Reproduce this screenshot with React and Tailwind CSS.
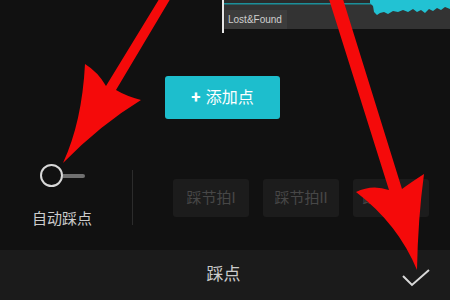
const font = "font-['Roboto','Noto_Sans_CJK_SC',sans-serif]";

const Waveform = () => (
  <svg className="absolute left-0 top-0" width="226" height="16" viewBox="0 0 226 16">
    <rect x="0" y="0" width="226" height="3" fill="#2a2a2a" />
    <rect x="0" y="3" width="150" height="1.5" fill="#1b8f9a" />
    <polygon
      fill="#22c2d3"
      points="146,0 146,3 149,6 150,12 153,15 156,13 160,12 164,14 169,11 174,12 179,10 184,12 189,9 193,12 197,10 201,13 205,9 209,11 213,8 217,10 221,7 226,9 226,0"
    />
  </svg>
);

const Toggle = () => (
  <div className="flex items-center">
    <div className="w-[23px] h-[23px] rounded-full border-2 border-[#d8d8d8]" />
    <div className="w-[22px] h-[4px] bg-[#707070] rounded-r-full" />
  </div>
);

const Preset = ({ label }) => (
  <div className="w-[76px] h-[38px] shrink-0 rounded-[3px] bg-[#1c1c1c] flex items-center justify-center text-[15px] text-[#474747]">
    {label}
  </div>
);

const Arrows = () => (
  <svg className="absolute inset-0 pointer-events-none" width="450" height="300" viewBox="0 0 450 300">
    <path
      fill="#f50a0a"
      d="M161,-4 L106,86 Q98,72 85,64 Q82,122 63,163 Q100,125 141,100 Q126,96 116,90 L172,-4 Z"
    />
    <path
      fill="#f50a0a"
      d="M328,-4 L389,190 Q372,184 356,192 Q398,224 417,270 Q418,218 424,174 Q410,183 402,189 L342,-4 Z"
    />
  </svg>
);

export default function App() {
  return (
    <div className={`relative w-[450px] h-[300px] bg-[#111111] overflow-hidden flex flex-col ${font}`}>
      <div className="flex h-[33px] shrink-0">
        <div className="w-[222px]" />
        <div className="w-[2px] h-[33px] bg-[#e6e6e6]" />
        <div className="relative flex-1 h-[29px] bg-[#333333]">
          <Waveform />
          <div className="mt-[10px] ml-px w-[62px] h-[19px] bg-[#3c3c3c] pl-[3px] text-[10px] leading-[19px] text-[#cfcfcf] font-['Liberation_Sans',sans-serif]">
            Lost&amp;Found
          </div>
        </div>
      </div>

      <div className="pl-[165px] mt-[43px]">
        <button className="w-[115px] h-[43px] rounded-[3px] bg-[#1dbecd] text-white text-[16px] flex items-center justify-center gap-[5px]">
          <span className="font-bold text-[17px] leading-none">+</span>
          <span>添加点</span>
        </button>
      </div>

      <div className="flex mt-[45px] h-[63px]">
        <div className="w-[124px] flex flex-col items-center">
          <div className="pl-[1px]">
            <Toggle />
          </div>
          <div className="mt-[25px] text-[15px] leading-[15px] text-[#cccccc]">自动踩点</div>
        </div>
        <div className="w-px h-[55px] mt-[6px] ml-[8px] bg-[#2c2c2c]" />
        <div className="flex gap-[14px] ml-[40px] mt-[15px]">
          <Preset label="踩节拍I" />
          <Preset label="踩节拍II" />
          <Preset label="踩节拍III" />
        </div>
      </div>

      <div className="flex-1" />

      <div className="h-[50px] bg-[#1b1b1b] grid grid-cols-3 items-center">
        <div />
        <div className="text-center text-[17px] text-[#cccccc] -ml-[3px]">踩点</div>
        <div className="flex justify-end pr-[20px] pt-[5px]">
          <svg width="28" height="18" viewBox="0 0 28 18">
            <path d="M1,7 L10,16 L27,1" fill="none" stroke="#d8d8d8" strokeWidth="2" />
          </svg>
        </div>
      </div>

      <Arrows />
    </div>
  );
}
